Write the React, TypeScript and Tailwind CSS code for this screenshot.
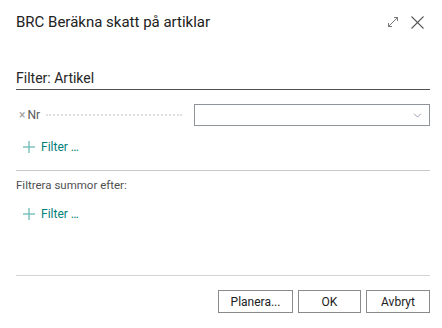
import { ChevronDown } from "lucide-react";

function ExpandIcon() {
  return (
    <svg width="12" height="12" viewBox="0 0 12 12" fill="none" stroke="#777777" strokeWidth="1">
      <path d="M1.5 10.5 L10.5 1.5" />
      <path d="M7 1.5 H10.5 V5" />
      <path d="M1.5 7 V10.5 H5" />
    </svg>
  );
}

function CloseIcon() {
  return (
    <svg width="13" height="13" viewBox="0 0 13 13" fill="none" stroke="#5a5a5a" strokeWidth="1.1">
      <path d="M0.5 0.5 L12.5 12.5" />
      <path d="M12.5 0.5 L0.5 12.5" />
    </svg>
  );
}

function PlusIcon() {
  return (
    <svg width="12" height="12" viewBox="0 0 12 12" fill="none" stroke="#74bfbb" strokeWidth="1.4">
      <path d="M6 0 V12" />
      <path d="M0 6 H12" />
    </svg>
  );
}

function AddFilter() {
  return (
    <div className="flex h-[22px] items-center gap-[6px] pl-[7px] text-[12px] text-[#00807b]">
      <PlusIcon />
      <span>Filter …</span>
    </div>
  );
}

function ActionButton({ label, width }: { label: string; width: string }) {
  return (
    <button
      className={`flex h-[23px] items-center justify-center border border-[#8a8a8a] bg-white text-[12px] text-[#212121] ${width}`}
    >
      {label}
    </button>
  );
}

export default function App() {
  return (
    <div
      className="flex h-[328px] w-[442px] flex-col bg-white pl-4 pr-3 text-[#212121]"
      style={{ fontFamily: 'Roboto, "Noto Sans", sans-serif' }}
    >
      <div className="flex h-[44px] items-center justify-between pr-[6px]">
        <h1 className="text-[15px] text-[#212121]">BRC Beräkna skatt på artiklar</h1>
        <div className="flex items-center gap-[12px]">
          <ExpandIcon />
          <CloseIcon />
        </div>
      </div>

      <div className="mt-[24px] flex h-[22px] items-center border-b border-[#505050] text-[14px] text-[#262626]">
        Filter: Artikel
      </div>

      <div className="mt-[14px] flex h-[22px] items-center">
        <div className="flex w-[178px] items-center pr-[6px] text-[12px]">
          <span className="ml-[3px] text-[12px] text-[#a0a0a0]">×</span>
          <span className="ml-[2px] text-[#5a5a5a]">Nr</span>
          <span className="mx-[6px] flex-1 border-b-2 border-dotted border-[#e0e0e0]" />
        </div>
        <div className="flex h-[22px] flex-1 items-center justify-end border border-[#8f949b] pr-[5px]">
          <ChevronDown size={13} strokeWidth={1.2} className="text-[#6b6f8c]" />
        </div>
      </div>

      <div className="mt-[10px]">
        <AddFilter />
      </div>

      <div className="mt-[12px] h-px bg-[#c8c8c8]" />

      <div className="mt-[4px] flex h-[22px] items-center text-[11.5px] text-[#505050]">
        Filtrera summor efter:
      </div>

      <div className="mt-[6px]">
        <AddFilter />
      </div>

      <div className="mt-[50px] h-px bg-[#d4d4d4]" />

      <div className="mt-[14px] flex justify-end gap-[5px]">
        <ActionButton label="Planera..." width="w-[75px]" />
        <ActionButton label="OK" width="w-[63px]" />
        <ActionButton label="Avbryt" width="w-[64px]" />
      </div>
    </div>
  );
}
